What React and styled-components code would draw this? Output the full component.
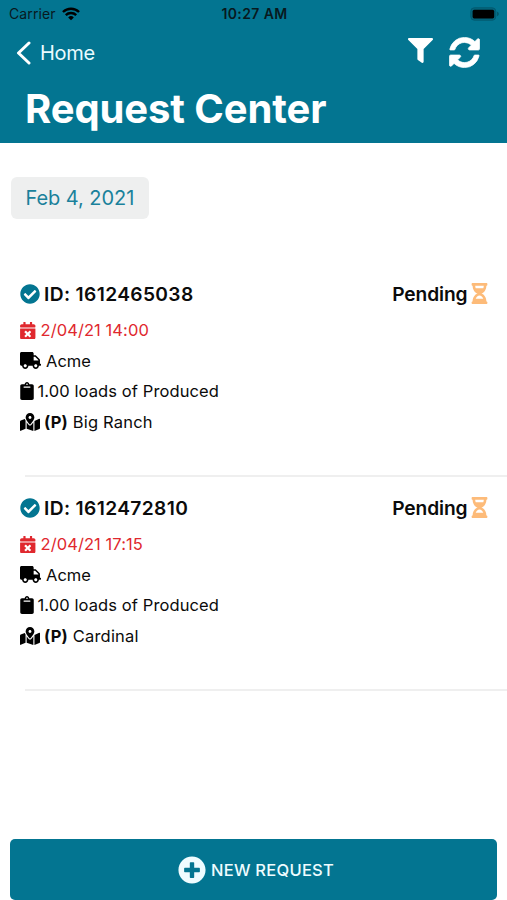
import React from 'react';
import styled, { createGlobalStyle } from 'styled-components';
import {
  FaCalendarTimes,
  FaCheckCircle,
  FaClipboard,
  FaFilter,
  FaHourglassHalf,
  FaMapMarkedAlt,
  FaPlusCircle,
  FaTruck,
} from 'react-icons/fa';

const GlobalStyle = createGlobalStyle`
  * {
    box-sizing: border-box;
  }

  body {
    margin: 0;
    background-color: #fff;
    color: #0b0b0b;
    font-family: Inter, 'Liberation Sans', sans-serif;
  }
`;

const Screen = styled.div`
  height: 900px;
  display: flex;
  flex-direction: column;
  overflow: hidden;
`;

const Header = styled.header`
  height: 142.5px;
  flex-shrink: 0;
  background-color: #037591;
  color: #fff;
`;

const StatusBar = styled.div`
  height: 27px;
  padding: 0 7px 0 9px;
  display: grid;
  grid-template-columns: 1fr auto 1fr;
  align-items: center;
  font-size: 14px;
  line-height: 27px;
  color: #08191e;
`;

const Carrier = styled.div`
  display: flex;
  align-items: center;
  gap: 6px;
  letter-spacing: 0.1px;
`;

const Clock = styled.div`
  font-weight: 600;
  letter-spacing: 0.4px;
`;

const Battery = styled.svg`
  justify-self: end;
`;

const NavBar = styled.nav`
  height: 51px;
  padding: 0 27px 0 16px;
  display: flex;
  justify-content: space-between;
  align-items: center;
`;

const BackButton = styled.button`
  border: 0;
  padding: 0;
  background: none;
  color: #e9fbff;
  font-family: inherit;
  font-size: 20px;
  letter-spacing: -0.3px;
  display: flex;
  align-items: center;
  gap: 8px;
`;

const Actions = styled.div`
  display: flex;
  align-items: flex-start;
  gap: 16px;
`;

const FilterIcon = styled(FaFilter)`
  margin-top: 1px;
`;

const Title = styled.h1`
  margin: 0;
  padding: 7px 0 0 25px;
  font-size: 40px;
  font-weight: 700;
  line-height: 48px;
  letter-spacing: -0.1px;
`;

const Content = styled.main`
  flex: 1;
  padding-top: 34.5px;
`;

const DateTag = styled.div`
  width: 138.5px;
  height: 42px;
  margin-left: 10.5px;
  margin-bottom: 43px;
  padding-left: 15px;
  border-radius: 6px;
  background-color: #eeefef;
  color: #1a819b;
  font-size: 20px;
  line-height: 42px;
  letter-spacing: -0.05px;
`;

const Card = styled.article`
  height: 214px;
  padding: 13.5px 19.5px 0 20px;
  position: relative;

  &::after {
    content: '';
    position: absolute;
    left: 25px;
    right: 0;
    bottom: -1px;
    height: 2px;
    background-color: #efefef;
  }
`;

const CardHeader = styled.div`
  height: 36px;
  margin-bottom: 3.5px;
  display: flex;
  justify-content: space-between;
  align-items: center;
  font-size: 19.2px;
  font-weight: 600;
`;

const Label = styled.div`
  display: flex;
  align-items: center;
  gap: 4px;
  letter-spacing: ${props => props.$spacing};
`;

const Line = styled.div`
  height: 30.6px;
  display: flex;
  align-items: center;
  gap: ${props => props.$gap || '4px'};
  font-size: 16.5px;
  letter-spacing: ${props => props.$spacing || '0'};
  color: ${props => props.$color || 'inherit'};

  svg {
    color: ${props => props.$color || '#000'};
  }
`;

// The glyph is narrower than its square box, so the box is trimmed to it
const NarrowIcon = styled.span`
  width: ${props => props.$width};
  display: flex;
  justify-content: center;

  svg {
    flex-shrink: 0;
  }
`;

const Footer = styled.footer`
  padding: 0 10px;
`;

const NewButton = styled.button`
  width: 100%;
  height: 61px;
  border: 0;
  border-radius: 5px;
  background-color: #037591;
  color: #effcff;
  font-family: inherit;
  font-size: 16.5px;
  font-weight: 500;
  letter-spacing: 0.25px;
  padding: 0 0 0 5px;
  display: flex;
  justify-content: center;
  align-items: center;
  gap: 5px;
`;

const requests = [
  { id: '1612465038', date: '2/04/21 14:00', carrier: 'Acme', load: '1.00 loads of Produced', place: 'Big Ranch' },
  { id: '1612472810', date: '2/04/21 17:15', carrier: 'Acme', load: '1.00 loads of Produced', place: 'Cardinal' },
];

function WifiIcon() {
  return (
    <svg width="18" height="14" viewBox="0 0 19 14" fill="none" stroke="#000" strokeWidth="2.5">
      <path d="M1 4.9a12.2 12.2 0 0 1 17 0" />
      <path d="M4 8.2a7.9 7.9 0 0 1 11 0" />
      <path d="M9.5 13.7 6.5 10.6a4.3 4.3 0 0 1 6 0z" fill="#000" stroke="none" />
    </svg>
  );
}

function BatteryIcon() {
  return (
    <Battery width="30" height="14" viewBox="0 0 30 14">
      <rect x="0.8" y="0.8" width="25" height="12.4" rx="3.6" fill="#03657d" stroke="#035a70" />
      <rect x="2.6" y="2.8" width="21.6" height="8.6" rx="1.6" fill="#000" />
      <path d="M27.3 4.8c1.7.6 1.7 3.8 0 4.4z" fill="#03495b" />
    </Battery>
  );
}

function BackIcon() {
  return (
    <svg width="16" height="24" viewBox="0 0 16 24" fill="none" stroke="#fff" strokeWidth="3">
      <path d="M13 2 2.5 12 13 22" strokeLinecap="round" strokeLinejoin="round" />
    </svg>
  );
}

function RefreshIcon() {
  return (
    <svg width="31" height="31" viewBox="-20 -20 1576 1576" fill="#fff" stroke="#fff" strokeWidth="36">
      <path d="M1511 928q0 5-1 7-64 268-268 434.500T764 1536q-146 0-282.500-55T238 1324l-129 129q-19 19-45 19t-45-19-19-45V960q0-26 19-45t45-19h448q26 0 45 19t19 45-19 45l-137 137q71 66 161 102t187 36q134 0 250-65t186-179q11-17 53-117 8-23 30-23h192q13 0 22.500 9.500t9.500 22.500zM1536 128v448q0 26-19 45t-45 19h-448q-26 0-45-19t-19-45 19-45l138-138Q969 256 768 256q-134 0-250 65T332 500q-11 17-53 117-8 23-30 23H50q-13 0-22.500-9.500T18 608v-7q65-268 270-434.500T768 0q146 0 284 55.500T1297 212l130-129q19-19 45-19t45 19 19 45z" />
    </svg>
  );
}

function Request({ id, date, carrier, load, place }) {
  return (
    <Card>
      <CardHeader>
        <Label $spacing="0.36px">
          <FaCheckCircle size={20} color="#037591" />
          ID: {id}
        </Label>
        <Label $spacing="-0.1px">
          Pending
          <NarrowIcon $width="16px">
            <FaHourglassHalf size={21} color="#fdbb79" />
          </NarrowIcon>
        </Label>
      </CardHeader>
      <Line $color="#e0282e" $gap="5px" $spacing="0.08px">
        <NarrowIcon $width="15.5px">
          <FaCalendarTimes size={17.5} />
        </NarrowIcon>
        {date}
      </Line>
      <Line $gap="5px">
        <FaTruck size={21} />
        {carrier}
      </Line>
      <Line $spacing="0.1px">
        <NarrowIcon $width="13.5px">
          <FaClipboard size={18} />
        </NarrowIcon>
        {load}
      </Line>
      <Line $spacing="0.18px">
        <FaMapMarkedAlt size={20} />
        <span>
          <b>(P)</b> {place}
        </span>
      </Line>
    </Card>
  );
}

export default function App() {
  return (
    <Screen>
      <GlobalStyle />
      <Header>
        <StatusBar>
          <Carrier>
            Carrier
            <WifiIcon />
          </Carrier>
          <Clock>10:27 AM</Clock>
          <BatteryIcon />
        </StatusBar>
        <NavBar>
          <BackButton>
            <BackIcon />
            Home
          </BackButton>
          <Actions>
            <FilterIcon size={25} />
            <RefreshIcon />
          </Actions>
        </NavBar>
        <Title>Request Center</Title>
      </Header>
      <Content>
        <DateTag>Feb 4, 2021</DateTag>
        {requests.map(request => (
          <Request key={request.id} {...request} />
        ))}
      </Content>
      <Footer>
        <NewButton>
          <FaPlusCircle size={28} />
          NEW REQUEST
        </NewButton>
      </Footer>
    </Screen>
  );
}
